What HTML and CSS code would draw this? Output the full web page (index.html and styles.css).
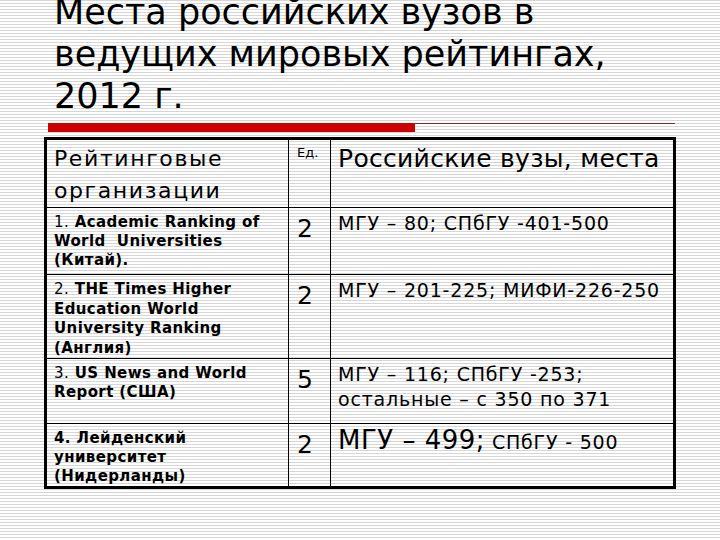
FILE: index.html
```html
<!DOCTYPE html>
<html lang="ru">
<head>
<meta charset="utf-8">
<link rel="stylesheet" href="styles.css">
</head>
<body>
<div class="slide">
  <h1 class="title">Места российских вузов в<br>ведущих мировых рейтингах,<br>2012 г.</h1>
  <div class="rule"><div class="rule-red"></div><div class="rule-thin"></div></div>
  <div class="grid">
    <div class="cell c1 head-left">Рейтинговые<br>организации</div>
    <div class="cell c2 unit">Ед.</div>
    <div class="cell c3 head-right">Российские вузы, места</div>

    <div class="cell c1 org"><span class="num">1.</span> Academic Ranking of<br>World&nbsp; Universities<br>(Китай).</div>
    <div class="cell c2 count">2</div>
    <div class="cell c3 places">МГУ – 80; СПбГУ -401-500</div>

    <div class="cell c1 org tall"><span class="num">2.</span> THE Times Higher<br>Education World<br>University Ranking<br>(Англия)</div>
    <div class="cell c2 count">2</div>
    <div class="cell c3 places">МГУ – 201-225; МИФИ-226-250</div>

    <div class="cell c1 org"><span class="num">3.</span> US News and World<br>Report (США)</div>
    <div class="cell c2 count">5</div>
    <div class="cell c3 places two">МГУ – 116; СПбГУ -253;<br>остальные – с 350 по 371</div>

    <div class="cell c1 org last">4. Лейденский<br>университет<br>(Нидерланды)</div>
    <div class="cell c2 count last">2</div>
    <div class="cell c3 places big last"><span class="big-part">МГУ – 499;</span> СПбГУ - 500</div>
  </div>
</div>
</body>
</html>
```

FILE: styles.css
```css
html, body {
  margin: 0;
  padding: 0;
}
body {
  width: 720px;
  height: 540px;
  overflow: hidden;
  background: repeating-linear-gradient(to bottom, #d6d6d6 0, #d6d6d6 1px, #ffffff 1px, #ffffff 3px);
  font-family: "DejaVu Sans", Verdana, sans-serif;
  color: #000;
}
.slide {
  display: flex;
  flex-direction: column;
}
.title {
  margin: -9px 0 0 54px;
  font-family: "DejaVu Sans", Verdana, sans-serif;
  font-weight: normal;
  font-size: 35px;
  line-height: 42px;
  color: #000;
}
.rule {
  display: flex;
  margin: 6px 0 0 48px;
  width: 627px;
  height: 9px;
}
.rule-red {
  width: 367px;
  height: 9px;
  background: #cc0000;
}
.rule-thin {
  flex: 1;
  height: 1px;
  background: #7a2a2a;
}
.grid {
  margin: 5px 0 0 44px;
  width: 626px;
  border: 3px solid #000;
  display: grid;
  grid-template-columns: 242px 42px 342px;
  grid-template-rows: 68px 67px 84px 65px 62px;
}
.cell {
  border-bottom: 1px solid #000;
  border-right: 1px solid #000;
  box-sizing: border-box;
}
.c3 { border-right: none; }
.last { border-bottom: none; }
.c1 { padding: 5px 0 0 7px; }
.c2 { padding: 4px 0 0 8px; }
.c3 { padding: 4px 0 0 7px; }

.head-left {
  font-size: 22px;
  line-height: 32px;
  letter-spacing: 1.6px;
  padding-top: 3px;
}
.unit {
  font-size: 13px;
  line-height: 14px;
  padding-top: 6px;
}
.head-right {
  font-size: 25px;
  line-height: 32px;
  letter-spacing: 0.3px;
  padding-top: 3px;
}
.org {
  font-size: 15px;
  line-height: 19px;
  font-weight: bold;
  letter-spacing: 0.4px;
}
.org.tall {
  line-height: 19.7px;
}
.num { font-weight: normal; }
.count {
  font-size: 25px;
  line-height: 30px;
  padding-top: 6px;
}
.places {
  font-size: 19px;
  line-height: 25px;
  letter-spacing: 0.8px;
  padding-top: 3px;
}
.big {
  padding-top: 4px;
}
.big-part {
  font-size: 26px;
  letter-spacing: 0.5px;
}
```
